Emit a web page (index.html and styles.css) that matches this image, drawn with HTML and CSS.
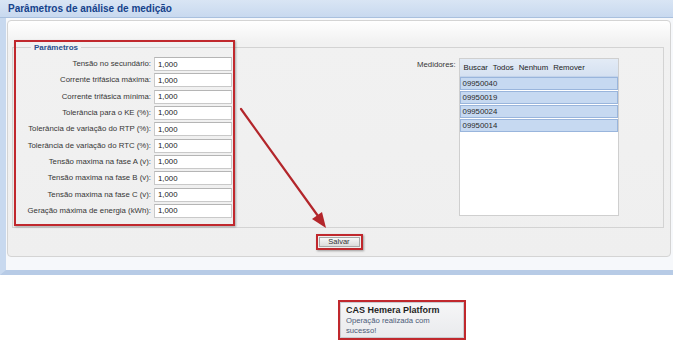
FILE: index.html
```html
<!DOCTYPE html>
<html>
<head>
  <title>Parâmetros de análise de medição</title>
  <link rel="stylesheet" href="styles.css">
</head>
<body>
  <div class="window">
    <div class="window-header">Parâmetros de análise de medição</div>
    <div class="window-body">
      <div class="panel">
        <fieldset class="params">
          <legend>Parâmetros</legend>
          <div class="cols">
            <div class="form">
              <label for="f1">Tensão no secundário:</label>
              <input type="text" id="f1" value="1,000">
              <label for="f2">Corrente trifásica máxima:</label>
              <input type="text" id="f2" value="1,000">
              <label for="f3">Corrente trifásica mínima:</label>
              <input type="text" id="f3" value="1,000">
              <label for="f4">Tolerância para o KE (%):</label>
              <input type="text" id="f4" value="1,000">
              <label for="f5">Tolerância de variação do RTP (%):</label>
              <input type="text" id="f5" value="1,000">
              <label for="f6">Tolerância de variação do RTC (%):</label>
              <input type="text" id="f6" value="1,000">
              <label for="f7">Tensão maxima na fase A (v):</label>
              <input type="text" id="f7" value="1,000">
              <label for="f8">Tensão maxima na fase B (v):</label>
              <input type="text" id="f8" value="1,000">
              <label for="f9">Tensão maxima na fase C (v):</label>
              <input type="text" id="f9" value="1,000">
              <label for="f10">Geração máxima de energia (kWh):</label>
              <input type="text" id="f10" value="1,000">
            </div>
            <div class="meters">
              <span class="meters-label">Medidores:</span>
              <div class="listbox">
                <div class="list-toolbar">
                  <span>Buscar</span>
                  <span>Todos</span>
                  <span>Nenhum</span>
                  <span>Remover</span>
                </div>
                <div class="list-item">09950040</div>
                <div class="list-item">09950019</div>
                <div class="list-item">09950024</div>
                <div class="list-item">09950014</div>
              </div>
            </div>
          </div>
        </fieldset>
        <div class="actions">
          <span class="mark">
            <button type="button">Salvar</button>
          </span>
        </div>
      </div>
    </div>
  </div>

  <div class="toast">
    <div class="toast-title">CAS Hemera Platform</div>
    <div class="toast-text">Operação realizada com sucesso!</div>
  </div>

  <!-- anotações por cima da tela -->
  <div class="mark-box"></div>
  <svg class="arrow" width="673" height="341" viewBox="0 0 673 341">
    <line x1="241" y1="109" x2="318" y2="216" stroke="#b3262b" stroke-width="2.2" stroke-linecap="round"/>
    <polygon points="326,228 312,219 322,212" fill="#b3262b"/>
  </svg>
</body>
</html>
```

FILE: styles.css
```css
body {
  margin: 0;
  padding: 0;
  background-color: #fff;
  font-family: "Liberation Sans", Arial, sans-serif;
  font-size: 7.8px;
  color: #363636;
}

.window {
  width: 673px;
}

.window-header {
  height: 17px;
  line-height: 17px;
  padding-left: 8px;
  font-size: 10px;
  font-weight: bold;
  color: #15428b;
  background: linear-gradient(#d9e5f4, #c8d9ef);
  border-bottom: 1px solid #a9c0de;
}

.window-body {
  border-left: 6px solid #c8d9ef;
  border-bottom: 5px solid #b7cbe6;
  background-color: #f6f8fb;
  padding: 2px 2px 13px 1px;
}

.panel {
  border: 1px solid #d4d4d4;
  border-radius: 4px;
  background: linear-gradient(#ffffff 0, #f1f1f1 22px, #efefef 100%);
  padding: 0 6px 6px 4px;
}

.params {
  margin: 22px 0 0 0;
  padding: 5px 0 9px 7px;
  border: 1px solid #d3d3d3;
  border-radius: 0;
}

.params legend {
  margin-left: 11px;
  padding: 0 3px;
  font-size: 8px;
  font-weight: bold;
  color: #2a4f8c;
}

.cols {
  display: flex;
  align-items: flex-start;
}

.form {
  display: grid;
  grid-template-columns: 131px 78px;
  column-gap: 3px;
  row-gap: 2.33px;
  grid-auto-rows: 14px;
}

.form label {
  text-align: right;
  line-height: 14px;
  white-space: nowrap;
}

.form input {
  box-sizing: border-box;
  width: 78px;
  height: 14px;
  margin: 0;
  padding: 0 3px;
  border: 1px solid #c9c9c9;
  border-top-color: #b5b5b5;
  background: #fff;
  font-family: "Liberation Sans", Arial, sans-serif;
  font-size: 7.8px;
  color: #222;
}

.meters {
  display: flex;
  align-items: flex-start;
  gap: 3px;
  margin-left: 185px;
  margin-top: 1px;
}

.meters-label {
  line-height: 14px;
}

.listbox {
  box-sizing: border-box;
  width: 160px;
  height: 158px;
  border: 1px solid #cfcfcf;
  background: #fff;
}

.list-toolbar {
  display: flex;
  gap: 5px;
  height: 17px;
  line-height: 17px;
  padding-left: 4px;
  background: linear-gradient(#e3ebf6, #d5e1f1);
  border-bottom: 1px solid #c2d3ea;
  color: #222;
}

.list-item {
  height: 11px;
  line-height: 11px;
  margin: 0 0 1px 0;
  padding-left: 2px;
  background-color: #c6d9f1;
  border: 1px solid #99b5dc;
  color: #2a2a2a;
}

.actions {
  display: flex;
  justify-content: center;
  margin-top: 6px;
  padding-left: 2px;
}

.mark {
  display: inline-block;
  border: 2px solid #c0282d;
  padding: 1px;
  box-shadow: 1px 1px 2px rgba(0, 0, 0, 0.35);
}

.mark button {
  display: block;
  width: 41px;
  height: 10px;
  padding: 0;
  border: 1px solid #a8a8a8;
  background: linear-gradient(#f7f7f7, #dcdcdc);
  font-family: "Liberation Sans", Arial, sans-serif;
  font-size: 7.5px;
  line-height: 8px;
  color: #333;
}

.toast {
  box-sizing: border-box;
  width: 128px;
  height: 40px;
  margin: 25px 0 0 338px;
  padding: 3px 14px 0 6px;
  border: 2px solid #c0282d;
  background: linear-gradient(#f6f6f7, #e9eaed);
  box-shadow: inset 0 0 0 1px #c9cbd0;
}

.toast-title {
  font-size: 9px;
  font-weight: bold;
  color: #1f1f1f;
  line-height: 11px;
}

.toast-text {
  font-size: 7.7px;
  line-height: 10px;
  color: #4b5a78;
}

.mark-box {
  position: absolute;
  left: 14px;
  top: 40px;
  width: 217px;
  height: 182px;
  border: 2px solid #c0282d;
  box-shadow: 1px 1px 2px rgba(0, 0, 0, 0.3);
}

.arrow {
  position: absolute;
  left: 0;
  top: 0;
  pointer-events: none;
}
```
